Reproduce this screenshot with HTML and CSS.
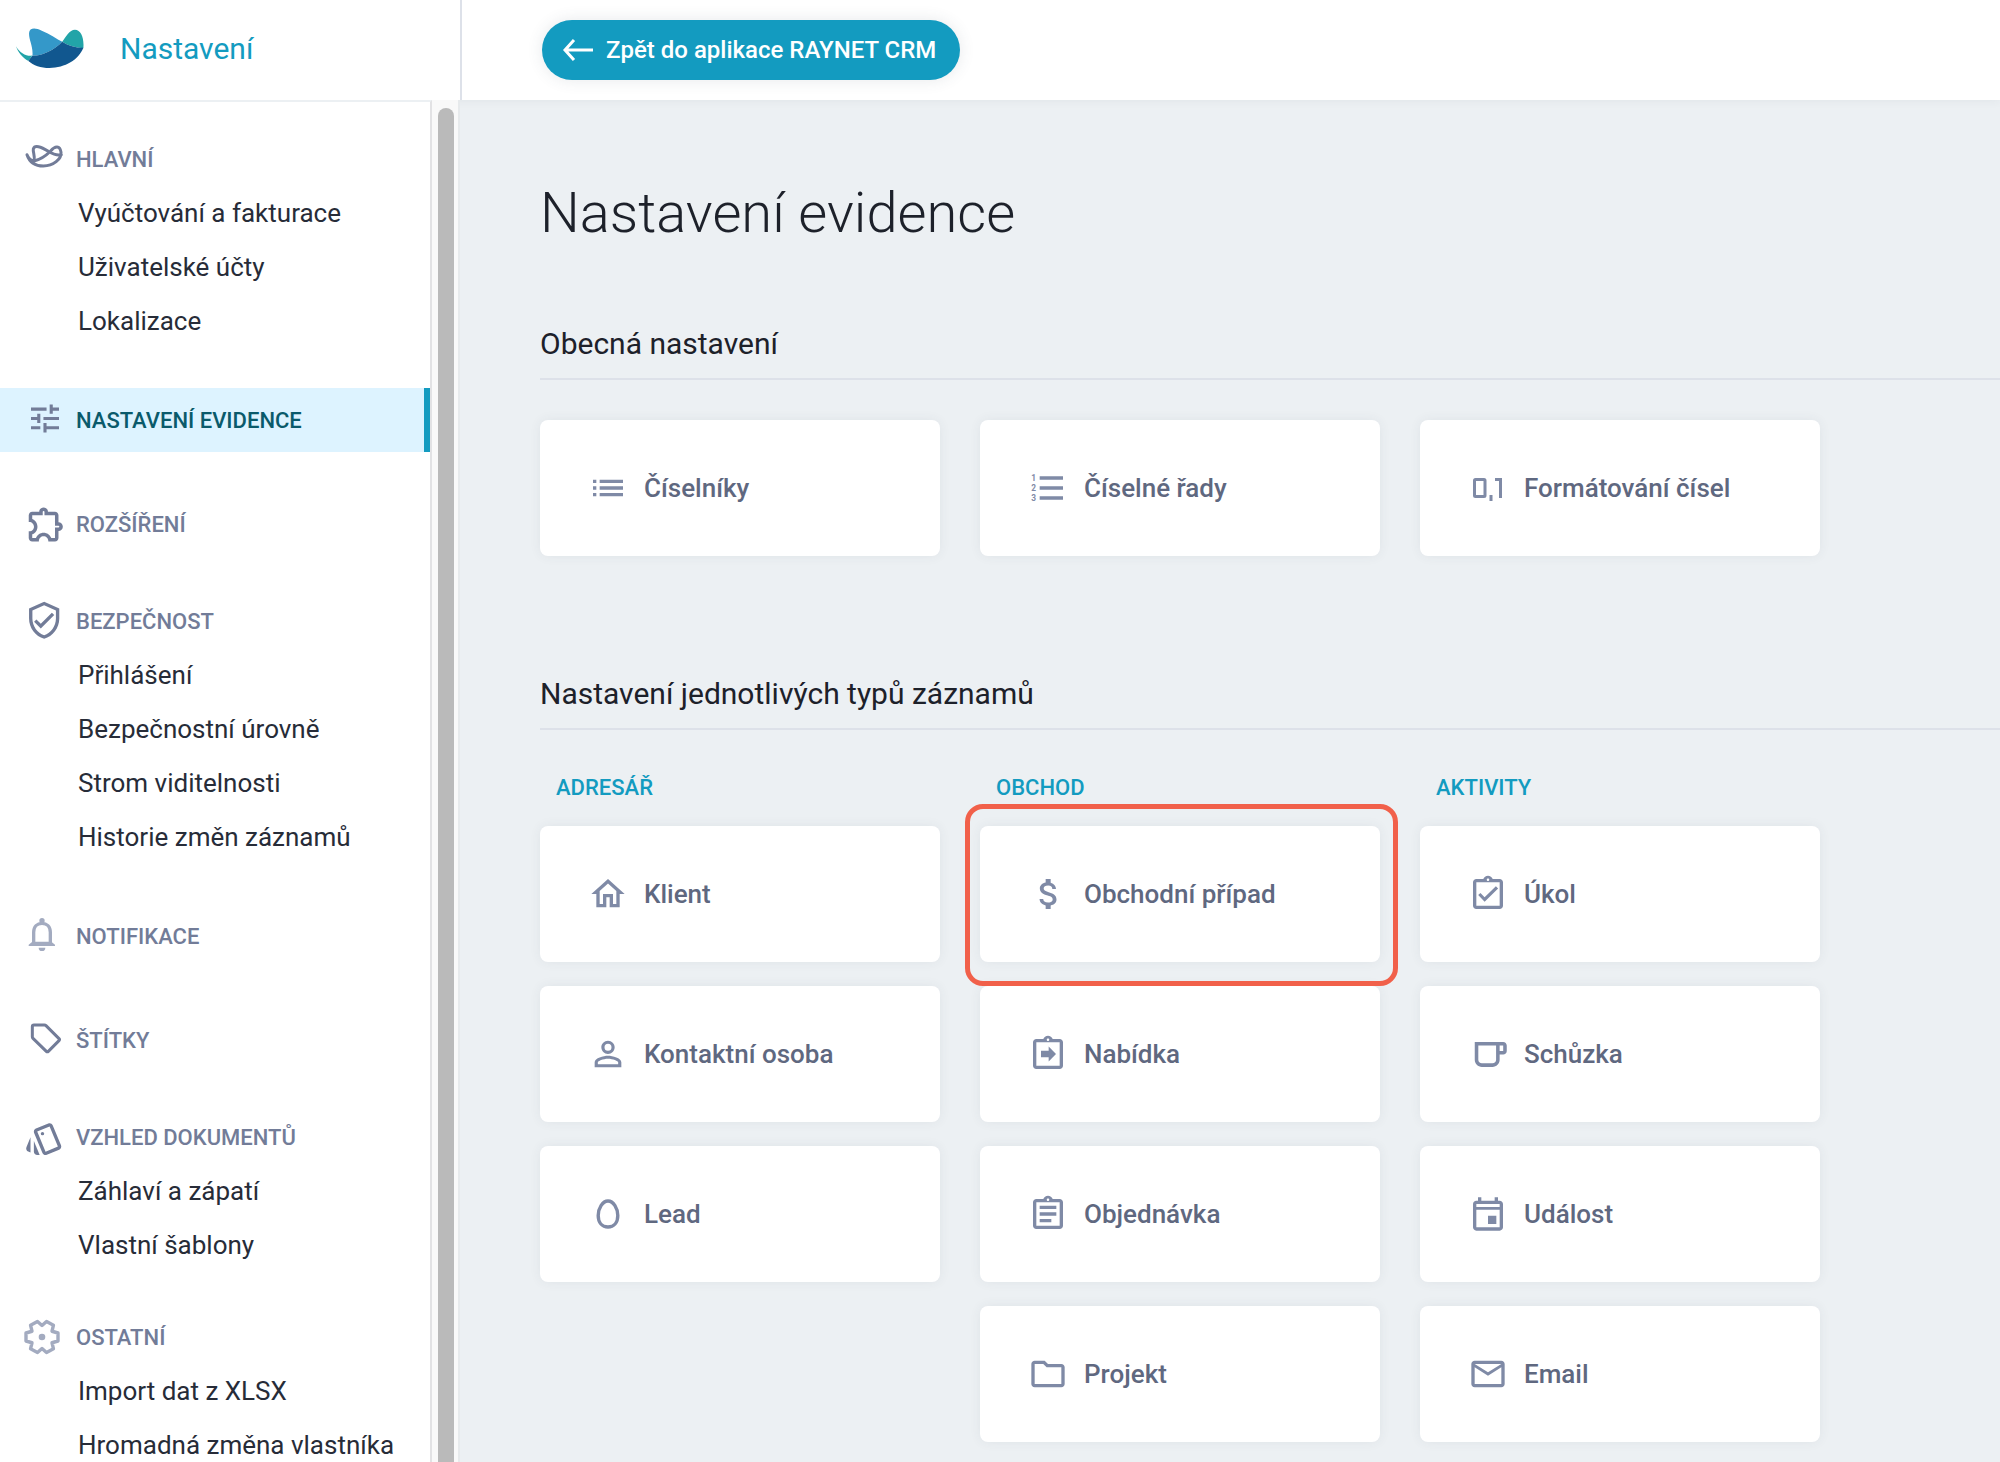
FILE: index.html
```html
<!DOCTYPE html>
<html lang="cs">
<head>
    <meta charset="UTF-8">
    <meta name="viewport" content="width=device-width, initial-scale=1.0">
    <title>Nastavení evidence</title>
    <link rel="stylesheet" href="styles.css">
</head>
<body>
    <header class="topbar">
        <div class="brand">
            <svg class="brand-logo" viewBox="48 85 203 119" aria-hidden="true">
                <path fill="#3498c9" d="M97 168C100 140 86 120 87 100C88 84 105 83 125 93C150 103 170 118 186 126C165 148 130 168 97 168Z"/>
                <path fill="#22a4a8" d="M186 126C196 112 208 90 224 90C242 90 252 115 249 145C225 144 205 138 186 126Z"/>
                <path fill="#22a4a8" d="M48 139C58 157 75 168 92 168L97 167C93 172 88 178 85 183C68 173 54 158 48 139Z"/>
                <path fill="#11578f" d="M85 183C90 176 95 170 97 168C130 168 165 148 186 126C205 138 225 144 249 144C235 180 195 204 148 204C122 204 100 196 85 183Z"/>
            </svg>
            <span class="brand-title">Nastavení</span>
        </div>
        <div class="toolbar">
            <button type="button" class="back-btn">
                <svg class="back-icon" viewBox="0 0 32 32" aria-hidden="true"><path d="M31 16H3M12 6L3 16l9 10"/></svg>
                Zpět do aplikace RAYNET CRM
            </button>
        </div>
    </header>

    <div class="layout">
        <nav class="sidebar">
            <section class="menu-group">
                <h2 class="menu-head">
                    <svg class="menu-icon stroked" viewBox="72 417 126 126" aria-hidden="true"><path d="M81 467C84 476 92 484 102 486C106 470 98 460 100 450C104 437 122 443 145 457C160 466 172 471 184 467M102 486C125 481 140 468 152 456C165 440 180 439 183 460C185 480 160 501 130 501C105 501 88 488 81 467"/></svg>
                    HLAVNÍ
                </h2>
                <a href="#" class="menu-item">Vyúčtování a fakturace</a>
                <a href="#" class="menu-item">Uživatelské účty</a>
                <a href="#" class="menu-item">Lokalizace</a>
            </section>

            <a href="#" class="menu-head menu-single active">
                <svg class="menu-icon" viewBox="-1.5 -.5 27 27" aria-hidden="true"><path d="M3 17v2h6v-2H3zM3 5v2h10V5H3zm10 16v-2h8v-2h-8v-2h-2v6h2zM7 9v2H3v2h4v2h2V9H7zm14 4v-2H11v2h10zm-6-4h2V7h4V5h-4V3h-2v6z"/></svg>
                NASTAVENÍ EVIDENCE
            </a>

            <a href="#" class="menu-head menu-single">
                <svg class="menu-icon" viewBox="-.7 0 24 24" aria-hidden="true"><path d="M10.5 4.5c.28 0 .5.22.5.5v2h6v6h2c.28 0 .5.22.5.5s-.22.5-.5.5h-2v6h-2.12c-.68-1.75-2.39-3-4.38-3s-3.7 1.25-4.38 3H4v-2.12c1.75-.68 3-2.39 3-4.38 0-1.99-1.24-3.7-2.99-4.38L4 7h6V5c0-.28.22-.5.5-.5m0-2C9.12 2.5 8 3.62 8 5H4c-1.1 0-1.99.9-1.99 2v3.8h.29c1.49 0 2.7 1.21 2.7 2.7s-1.21 2.7-2.7 2.7H2V20c0 1.1.9 2 2 2h3.8v-.3c0-1.49 1.21-2.7 2.7-2.7s2.7 1.21 2.7 2.7v.3H17c1.1 0 2-.9 2-2v-4c1.38 0 2.5-1.12 2.5-2.5S20.38 11 19 11V7c0-1.1-.9-2-2-2h-4c0-1.38-1.12-2.5-2.5-2.5z"/></svg>
                ROZŠÍŘENÍ
            </a>

            <section class="menu-group">
                <h2 class="menu-head">
                    <svg class="menu-icon" viewBox="0 0 25 25" aria-hidden="true"><path d="M12 1L3 5v6c0 5.55 3.84 10.74 9 12 5.16-1.26 9-6.45 9-12V5l-9-4zm7 10c0 4.52-2.98 8.69-7 9.93-4.02-1.24-7-5.41-7-9.93V6.3l7-3.11 7 3.11V11zm-11.59.59L6 13l4 4 8-8-1.41-1.42L10 14.17z"/></svg>
                    BEZPEČNOST
                </h2>
                <a href="#" class="menu-item">Přihlášení</a>
                <a href="#" class="menu-item">Bezpečnostní úrovně</a>
                <a href="#" class="menu-item">Strom viditelnosti</a>
                <a href="#" class="menu-item">Historie změn záznamů</a>
            </section>

            <a href="#" class="menu-head menu-single">
                <svg class="menu-icon light" viewBox="72 585 126 126" aria-hidden="true">
                    <path fill="none" stroke="currentColor" stroke-width="10" d="M101 672V637C101 619 112 610 126 610C140 610 151 619 151 637V672"/>
                    <path d="M86 678V674L97 665H154L165 674V678ZM116 683H136A10 10 0 0 1 116 683Z"/>
                    <circle cx="126" cy="602" r="8"/>
                </svg>
                NOTIFIKACE
            </a>

            <a href="#" class="menu-head menu-single">
                <svg class="menu-icon stroked" viewBox="72 895 126 126" aria-hidden="true"><path d="M102 913H133Q136 913 138 915L177 954Q180 957 177 960L145 992Q142 995 139 992L99 953Q97 951 97 948V918Q97 913 102 913Z"/></svg>
                ŠTÍTKY
            </a>

            <section class="menu-group">
                <h2 class="menu-head">
                    <svg class="menu-icon" viewBox="0 -1.5 25 25" aria-hidden="true"><path d="M2.53 19.65l1.34.56v-9.03l-2.43 5.86c-.41 1.02.08 2.19 1.09 2.61zm19.5-3.7L17.07 3.98c-.31-.75-1.04-1.21-1.81-1.23-.26 0-.53.04-.79.15L7.1 5.95c-.75.31-1.21 1.03-1.23 1.8-.01.27.04.54.15.8l4.96 11.97c.31.76 1.05 1.22 1.83 1.23.26 0 .52-.05.77-.15l7.36-3.05c1.02-.42 1.51-1.59 1.09-2.6zm-9.2 3.8L7.87 7.79l7.35-3.04h.01l4.95 11.95-7.35 3.05z"/><circle cx="11" cy="9" r="1"/><path d="M5.88 19.75c0 1.1.9 2 2 2h1.45l-3.45-8.34v6.34z"/></svg>
                    VZHLED DOKUMENTŮ
                </h2>
                <a href="#" class="menu-item">Záhlaví a zápatí</a>
                <a href="#" class="menu-item">Vlastní šablony</a>
            </section>

            <section class="menu-group">
                <h2 class="menu-head">
                    <svg class="menu-icon light" viewBox="-18 -21 42 42" aria-hidden="true">
                        <path fill="none" stroke="currentColor" stroke-width="3.4" stroke-linejoin="round" d="M16-4V4L10 5.75L11.46 11.86L4.54 15.5L0 11.5L-4.54 15.5L-11.46 11.86L-10 5.75L-16 4V-4L-10-5.75L-11.46-11.86L-4.54-15.5L0-11.5L4.54-15.5L11.46-11.86L10-5.75Z"/>
                        <circle r="3.3"/>
                    </svg>
                    OSTATNÍ
                </h2>
                <a href="#" class="menu-item">Import dat z XLSX</a>
                <a href="#" class="menu-item">Hromadná změna vlastníka</a>
            </section>
        </nav>
        <div class="scroll-track"><div class="scroll-thumb"></div></div>

        <main class="content">
            <h1 class="page-title">Nastavení evidence</h1>

            <section class="settings">
                <h2 class="section-title">Obecná nastavení</h2>
                <div class="columns">
                    <a href="#" class="card">
                        <svg class="card-icon" viewBox="0 0 24 24" aria-hidden="true"><path d="M3 13h2v-2H3v2zm0 4h2v-2H3v2zm0-8h2V7H3v2zm4 4h14v-2H7v2zm0 4h14v-2H7v2zM7 7v2h14V7H7z"/></svg>
                        Číselníky
                    </a>
                    <a href="#" class="card">
                        <svg class="card-icon" viewBox="0 0 24 24" aria-hidden="true">
                            <path d="M7 5v2h14V5H7zm0 14h14v-2H7v2zm0-6h14v-2H7v2z"/>
                            <text class="icon-digit" x="2" y="8">1</text>
                            <text class="icon-digit" x="2" y="14">2</text>
                            <text class="icon-digit" x="2" y="20">3</text>
                        </svg>
                        Číselné řady
                    </a>
                    <a href="#" class="card">
                        <svg class="card-icon" viewBox="0 0 40 40" aria-hidden="true"><g fill="none" stroke="currentColor" stroke-width="3"><rect x="6.5" y="11.5" width="10.5" height="17" rx="1"/><path d="M23 27v6M27 11.5h5.5V30"/></g></svg>
                        Formátování čísel
                    </a>
                </div>
            </section>

            <section class="settings">
                <h2 class="section-title">Nastavení jednotlivých typů záznamů</h2>
                <div class="columns">
                    <div class="column">
                        <h3 class="column-title">ADRESÁŘ</h3>
                        <a href="#" class="card">
                            <svg class="card-icon" viewBox="0 0 24 24" aria-hidden="true"><path d="M12 5.69l5 4.5V18h-2v-6H9v6H7v-7.81l5-4.5M12 3L2 12h3v8h6v-6h2v6h6v-8h3L12 3z"/></svg>
                            Klient
                        </a>
                        <a href="#" class="card">
                            <svg class="card-icon" viewBox="0 0 24 24" aria-hidden="true"><path d="M12 5.9a2.1 2.1 0 110 4.2 2.1 2.1 0 010-4.2m0 9c2.97 0 6.1 1.46 6.1 2.1v1.1H5.9V17c0-.64 3.13-2.1 6.1-2.1M12 4C9.79 4 8 5.79 8 8s1.79 4 4 4 4-1.79 4-4-1.79-4-4-4zm0 9c-2.67 0-8 1.34-8 4v3h16v-3c0-2.66-5.33-4-8-4z"/></svg>
                            Kontaktní osoba
                        </a>
                        <a href="#" class="card">
                            <svg class="card-icon" viewBox="0 0 40 40" aria-hidden="true"><path fill="none" stroke="currentColor" stroke-width="3.4" d="M20 7c-5.5 0-9.8 7.5-9.8 14.5 0 7.2 4 11.5 9.8 11.5s9.8-4.3 9.8-11.5C29.8 14.5 25.5 7 20 7z"/></svg>
                            Lead
                        </a>
                    </div>
                    <div class="column">
                        <h3 class="column-title">OBCHOD</h3>
                        <a href="#" class="card highlighted">
                            <svg class="card-icon" viewBox="-.6 0 24 24" aria-hidden="true"><path d="M11.8 10.9c-2.27-.59-3-1.2-3-2.15 0-1.09 1.01-1.85 2.7-1.85 1.78 0 2.44.85 2.5 2.1h2.21c-.07-1.72-1.12-3.3-3.21-3.81V3h-3v2.16c-1.94.42-3.5 1.68-3.5 3.61 0 2.31 1.91 3.46 4.7 4.13 2.5.6 3 1.48 3 2.41 0 .69-.49 1.79-2.7 1.79-2.06 0-2.87-.92-2.98-2.1h-2.2c.12 2.19 1.76 3.42 3.68 3.83V21h3v-2.15c1.95-.37 3.5-1.5 3.5-3.55 0-2.84-2.43-3.81-4.7-4.4z"/></svg>
                            Obchodní případ
                        </a>
                        <a href="#" class="card">
                            <svg class="card-icon" viewBox="0 0 24 24" aria-hidden="true"><path d="M16.8 12l-4.4-4.5V10H7.8v4h4.6v2.5zM19 3h-4.18C14.4 1.84 13.3 1 12 1c-1.3 0-2.4.84-2.82 2H5c-1.1 0-2 .9-2 2v14c0 1.1.9 2 2 2h14c1.1 0 2-.9 2-2V5c0-1.1-.9-2-2-2zm-7-.25c.41 0 .75.34.75.75s-.34.75-.75.75-.75-.34-.75-.75.34-.75.75-.75zM19 19H5V5h14v14z"/></svg>
                            Nabídka
                        </a>
                        <a href="#" class="card">
                            <svg class="card-icon" viewBox="0 0 24 24" aria-hidden="true"><path d="M7 15h7v2H7zm0-4h10v2H7zm0-4h10v2H7zM19 3h-4.18C14.4 1.84 13.3 1 12 1c-1.3 0-2.4.84-2.82 2H5c-1.1 0-2 .9-2 2v14c0 1.1.9 2 2 2h14c1.1 0 2-.9 2-2V5c0-1.1-.9-2-2-2zm-7-.25c.41 0 .75.34.75.75s-.34.75-.75.75-.75-.34-.75-.75.34-.75.75-.75zM19 19H5V5h14v14z"/></svg>
                            Objednávka
                        </a>
                        <a href="#" class="card">
                            <svg class="card-icon" viewBox="0 0 24 24" aria-hidden="true"><path d="M9.17 6l2 2H20v10H4V6h5.17M10 4H4c-1.1 0-1.99.9-1.99 2L2 18c0 1.1.9 2 2 2h16c1.1 0 2-.9 2-2V8c0-1.1-.9-2-2-2h-8l-2-2z"/></svg>
                            Projekt
                        </a>
                    </div>
                    <div class="column">
                        <h3 class="column-title">AKTIVITY</h3>
                        <a href="#" class="card">
                            <svg class="card-icon" viewBox="0 0 24 24" aria-hidden="true"><path d="M19 3h-4.18C14.4 1.84 13.3 1 12 1c-1.3 0-2.4.84-2.82 2H5c-1.1 0-2 .9-2 2v14c0 1.1.9 2 2 2h14c1.1 0 2-.9 2-2V5c0-1.1-.9-2-2-2zm-7-.25c.41 0 .75.34.75.75s-.34.75-.75.75-.75-.34-.75-.75.34-.75.75-.75zM19 19H5V5h14v14z"/><path fill="none" stroke="currentColor" stroke-width="1.9" d="M6.8 12L10 15.3L17.4 8"/></svg>
                            Úkol
                        </a>
                        <a href="#" class="card">
                            <svg class="card-icon" viewBox=".2 -1.5 22.5 22.5" aria-hidden="true"><path d="M20 3H4v10c0 2.21 1.79 4 4 4h6c2.21 0 4-1.79 4-4v-3h2c1.11 0 2-.9 2-2V5c0-1.11-.89-2-2-2zm-4 10c0 1.1-.9 2-2 2H8c-1.1 0-2-.9-2-2V5h10v8zm4-5h-2V5h2v3z"/></svg>
                            Schůzka
                        </a>
                        <a href="#" class="card">
                            <svg class="card-icon" viewBox="0 0 24 24" aria-hidden="true"><path d="M19 4h-1V2h-2v2H8V2H6v2H5c-1.11 0-1.99.9-1.99 2L3 20c0 1.1.89 2 2 2h14c1.1 0 2-.9 2-2V6c0-1.1-.9-2-2-2zm0 16H5V9.5h14V20zm0-12.200H5V6h14v1.800zM12 13h5v5h-5z"/></svg>
                            Událost
                        </a>
                        <a href="#" class="card">
                            <svg class="card-icon" viewBox="0 0 24 24" aria-hidden="true"><path d="M22 6c0-1.1-.9-2-2-2H4c-1.1 0-2 .9-2 2v12c0 1.1.9 2 2 2h16c1.1 0 2-.9 2-2V6zm-2 0l-8 5-8-5h16zm0 12H4V8l8 5 8-5v10z"/></svg>
                            Email
                        </a>
                    </div>
                </div>
            </section>
        </main>
    </div>
</body>
</html>
```
FILE: styles.css
```css
* {
    box-sizing: border-box;
}

body {
    margin: 0;
    height: 100vh;
    display: flex;
    flex-direction: column;
    overflow: hidden;
    font-family: Roboto, "Liberation Sans", sans-serif;
    color: #1d212a;
    background: #ecf0f3;
}

h1, h2, h3 {
    margin: 0;
}

a {
    text-decoration: none;
}

svg {
    flex: none;
    fill: currentColor;
}

/* top bar */
.topbar {
    display: flex;
    flex: none;
    height: 100px;
    background: white;
    box-shadow: 0 0 10px rgba(60, 70, 90, 0.07);
}

.brand {
    display: flex;
    align-items: center;
    gap: 36px;
    width: 462px;
    padding: 0 16px 4px;
    border-right: 2px solid #dde1e9;
}

.brand-logo {
    width: 68px;
    height: 40px;
}

.brand-title {
    font-size: 30px;
    color: #139bc0;
}

.toolbar {
    display: flex;
    align-items: center;
    padding: 0 80px;
}

.back-btn {
    display: flex;
    align-items: center;
    gap: 12px;
    height: 60px;
    padding: 0 24px 0 20px;
    border: none;
    border-radius: 30px;
    font-family: inherit;
    font-size: 24px;
    font-weight: 500;
    color: white;
    background: #139bc0;
    box-shadow: 0 0 16px rgba(60, 70, 90, 0.12);
    cursor: pointer;
}

.back-icon {
    width: 32px;
    height: 32px;
    fill: none;
    stroke: currentColor;
    stroke-width: 3;
}

/* sidebar */
.layout {
    display: flex;
    flex: 1;
    min-height: 0;
}

.sidebar {
    flex: none;
    width: 432px;
    padding-top: 30px;
    overflow: hidden;
    background: white;
    border-top: 2px solid #ecf0f3;
    border-right: 2px solid #e2e2e4;
}

.menu-group {
    margin-top: 38px;
}

.menu-group:first-child {
    margin-top: 0;
}

.menu-head {
    display: flex;
    align-items: center;
    gap: 10px;
    height: 54px;
    padding-left: 24px;
    font-size: 22px;
    font-weight: 500;
    color: #727c98;
}

.menu-single {
    height: 64px;
    margin-top: 40px;
}

.menu-icon {
    width: 42px;
    height: 42px;
    color: #727c98;
}

.menu-icon.light {
    color: #a3abc0;
}

.menu-icon.stroked {
    fill: none;
    stroke: currentColor;
    stroke-width: 9;
    stroke-linejoin: round;
    stroke-linecap: round;
}

.menu-head.active {
    color: #0a5a6b;
    background: #ddf3ff;
    border-right: 6px solid #139bc0;
}

.menu-item {
    display: block;
    padding-left: 78px;
    font-size: 26px;
    line-height: 54px;
    color: #272c38;
}

.scroll-track {
    display: flex;
    flex: none;
    width: 28px;
    padding: 8px 4px 0 6px;
    background: #f9f9f9;
    border-right: 2px solid #e7eaec;
}

.scroll-thumb {
    width: 16px;
    border-radius: 8px 8px 0 0;
    background: #bababa;
}

/* content */
.content {
    flex: 1;
    min-width: 0;
    padding: 80px 0 20px 80px;
}

.page-title {
    margin-bottom: 80px;
    font-size: 56px;
    font-weight: 300;
    line-height: 66px;
}

.settings + .settings {
    margin-top: 120px;
}

.section-title {
    padding-bottom: 16px;
    border-bottom: 2px solid #dde1e9;
    font-size: 30px;
    font-weight: 400;
    line-height: 36px;
}

.columns {
    display: grid;
    grid-template-columns: repeat(3, minmax(0, 400px));
    gap: 40px;
    margin-top: 40px;
}

.column {
    display: flex;
    flex-direction: column;
    gap: 24px;
    padding-top: 4px;
}

.column-title {
    padding-left: 16px;
    font-size: 22px;
    font-weight: 500;
    line-height: 28px;
    color: #139bc0;
}

.card {
    position: relative;
    display: flex;
    align-items: center;
    gap: 16px;
    height: 136px;
    padding: 0 48px;
    border-radius: 8px;
    font-size: 26px;
    font-weight: 500;
    color: #5f6880;
    background: white;
    box-shadow: 0 0 12px rgba(60, 70, 90, 0.07);
}

.card-icon {
    width: 40px;
    height: 40px;
    color: #7f8aa6;
}

.icon-digit {
    font-size: 5px;
    font-weight: 700;
}

/* red frame drawn over the neighbouring cards */
.highlighted::after {
    content: "";
    position: absolute;
    z-index: 1;
    top: -22px;
    right: -18px;
    bottom: -24px;
    left: -15px;
    border: 5px solid #f1604a;
    border-radius: 18px;
    pointer-events: none;
}
```
